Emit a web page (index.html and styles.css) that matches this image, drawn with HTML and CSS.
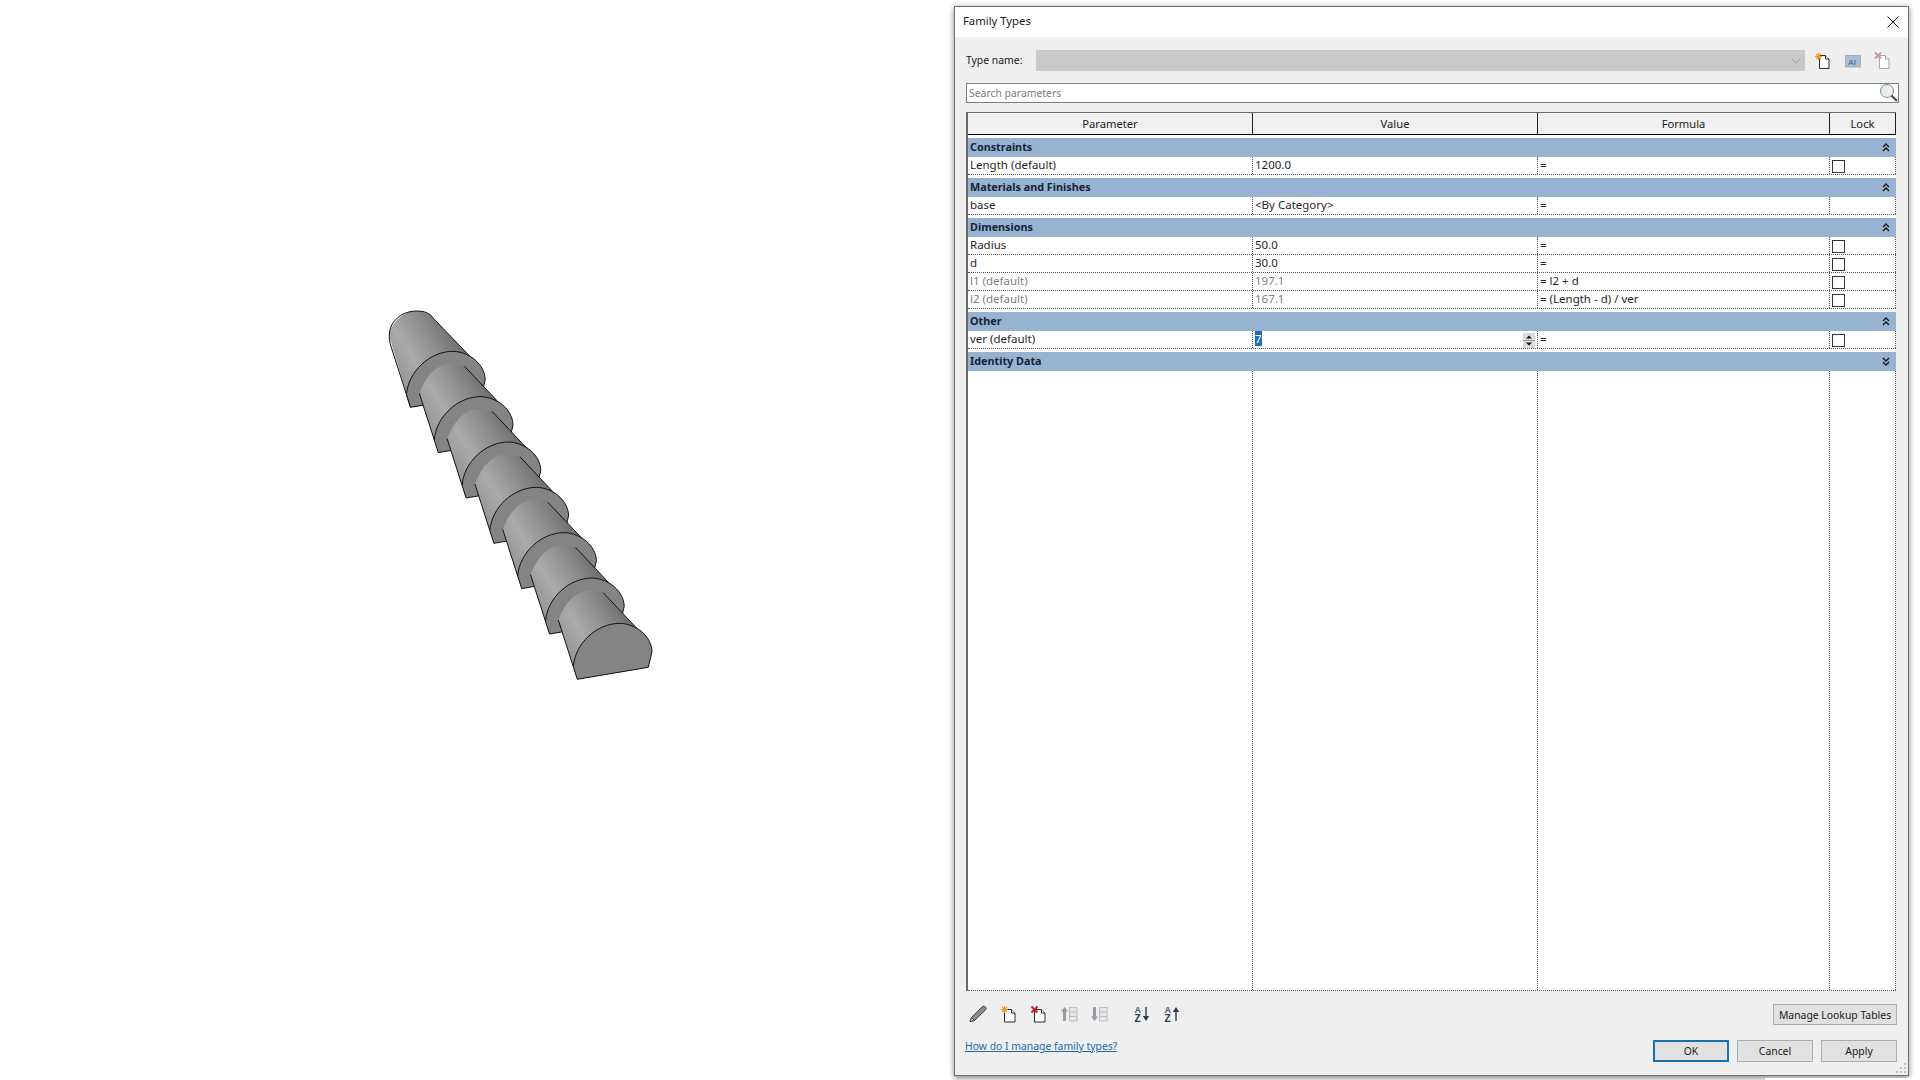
FILE: index.html
```html
<!DOCTYPE html>
<html lang="en">
<head>
<meta charset="utf-8">
<title>Family Types</title>
<link rel="stylesheet" href="styles.css">
</head>
<body>
<main class="stage">
  <svg class="model" width="290" height="390" viewBox="380 300 290 390" aria-label="3D model">
    <defs>
      <linearGradient id="cone" gradientUnits="userSpaceOnUse" x1="554" y1="640" x2="626" y2="596">
        <stop offset="0" stop-color="#929292"/>
        <stop offset="0.32" stop-color="#aaaaaa"/>
        <stop offset="0.62" stop-color="#8d8d8d"/>
        <stop offset="1" stop-color="#626262"/>
      </linearGradient>
      <path id="face" d="M577.3 679.3L573.3 666.7C575 643.3 596.7 623.3 620 623.3C636.7 624 651.7 636.7 652 651.7L648.3 667.3Z"/>
      <g id="tooth">
        <path d="M558.3 620C566 600 578 590.7 588 590.7C594 591 600 592 603.3 592.7L640 631.7L648.3 667.3L577.3 679.3L573.3 666.7Z" fill="url(#cone)"/>
        <path d="M558.3 620L573.3 666.7M603.3 592.7L640 631.7" class="edge"/>
        <use href="#face" class="face"/>
      </g>
    </defs>
    <g transform="translate(-166.8 -272)">
      <path d="M556.1 608.7C556 597 569 583 583.5 583C591 583 597 585 600.1 590.3L640 631.7L648.3 667.3L588 678L577.3 679.3Z" fill="url(#cone)"/>
      <path d="M577.3 679.3L556.9 615.5C555.5 610 555.7 604 558 598C563 588 573 583 583.5 583C591 583 597 585 600.1 590.3L640 631.7" class="edge"/>
      <use href="#face" class="face"/>
    </g>
    <use href="#tooth" transform="translate(-139 -226.7)"/>
    <use href="#tooth" transform="translate(-111.2 -181.3)"/>
    <use href="#tooth" transform="translate(-83.4 -136)"/>
    <use href="#tooth" transform="translate(-55.6 -90.7)"/>
    <use href="#tooth" transform="translate(-27.8 -45.3)"/>
    <use href="#tooth"/>
  </svg>
</main>

<section class="dialog">
  <header class="titlebar">
    <span class="title">Family Types</span>
    <svg class="close" width="12" height="12" viewBox="0 0 12 12"><path d="M.5.5l11 11M11.5.5l-11 11" stroke="#222" fill="none"/></svg>
  </header>

  <div class="dialog-body">
    <div class="type-row">
      <label class="type-label">Type name:</label>
      <div class="type-combo">
        <svg width="10" height="6" viewBox="0 0 10 6"><path d="M.5.5L5 5 9.500.5" stroke="#a4a4a4" fill="none"/></svg>
      </div>
      <div class="type-tools">
        <svg class="icon page-icon" width="18" height="18" viewBox="0 0 18 18">
          <path class="page" d="M5.500 3.500h6l3.500 3.500v9.500H5.500z"/><path class="page" d="M11.500 3.500V7H15"/>
          <path class="star" d="M4.500 1v7M1 4.500h7M2 2l5 5M7 2L2 7"/>
        </svg>
        <svg class="icon" width="18" height="16" viewBox="0 0 18 16">
          <rect x="1.500" y="2.500" width="15" height="11.500" fill="#a6bfd6" stroke="#a9adb1"/>
          <text x="4" y="12" class="tool-letter">AI</text>
        </svg>
        <svg class="icon page-icon" width="18" height="18" viewBox="0 0 18 18">
          <path class="page pale" d="M5.500 3.500h6l3.500 3.500v9.500H5.500z"/><path class="page pale" d="M11.500 3.500V7H15"/>
          <path class="cross pale-cross" d="M1 .500l6 6M7 .500l-6 6"/>
        </svg>
      </div>
    </div>

    <div class="search">
      <span class="search-text">Search parameters</span>
      <svg class="lens" width="20" height="20" viewBox="0 0 20 20">
        <circle cx="8" cy="8" r="6.500" fill="#e9eff0" stroke="#7f8a8c"/>
        <path d="M12.500 12.500l5.500 5.500" stroke="#555" stroke-width="2.400"/>
      </svg>
    </div>

    <div class="table">
      <div class="thead">
        <div class="th">Parameter</div>
        <div class="th">Value</div>
        <div class="th">Formula</div>
        <div class="th">Lock</div>
      </div>
      <div class="tbody">
        <div class="group"><span>Constraints</span><svg class="chev" width="8" height="9" viewBox="0 0 8 9"><path d="M1 4l3-3 3 3M1 8l3-3 3 3"/></svg></div>
        <div class="row">
          <div class="cell">Length (default)</div><div class="cell">1200.0</div><div class="cell">=</div>
          <div class="cell lock"><i class="check"></i></div>
        </div>
        <div class="gap"></div>
        <div class="group"><span>Materials and Finishes</span><svg class="chev" width="8" height="9" viewBox="0 0 8 9"><path d="M1 4l3-3 3 3M1 8l3-3 3 3"/></svg></div>
        <div class="row">
          <div class="cell">base</div><div class="cell">&lt;By Category&gt;</div><div class="cell">=</div>
          <div class="cell lock"></div>
        </div>
        <div class="gap"></div>
        <div class="group"><span>Dimensions</span><svg class="chev" width="8" height="9" viewBox="0 0 8 9"><path d="M1 4l3-3 3 3M1 8l3-3 3 3"/></svg></div>
        <div class="row">
          <div class="cell">Radius</div><div class="cell">50.0</div><div class="cell">=</div>
          <div class="cell lock"><i class="check"></i></div>
        </div>
        <div class="row">
          <div class="cell">d</div><div class="cell">30.0</div><div class="cell">=</div>
          <div class="cell lock"><i class="check"></i></div>
        </div>
        <div class="row">
          <div class="cell muted">l1 (default)</div><div class="cell muted">197.1</div><div class="cell">= l2 + d</div>
          <div class="cell lock"><i class="check"></i></div>
        </div>
        <div class="row">
          <div class="cell muted">l2 (default)</div><div class="cell muted">167.1</div><div class="cell">= (Length - d) / ver</div>
          <div class="cell lock"><i class="check"></i></div>
        </div>
        <div class="gap"></div>
        <div class="group"><span>Other</span><svg class="chev" width="8" height="9" viewBox="0 0 8 9"><path d="M1 4l3-3 3 3M1 8l3-3 3 3"/></svg></div>
        <div class="row">
          <div class="cell">ver (default)</div>
          <div class="cell spin-cell"><span class="selected">7</span>
            <span class="spinner">
              <svg width="12" height="15" viewBox="0 0 12 15"><rect width="12" height="15" fill="#dcdcdc"/><path d="M0 7.500h12" stroke="#9a9a9a"/><path d="M6 2.500l3 3H3z M6 12.500l3-3H3z" fill="#111"/></svg>
            </span>
          </div>
          <div class="cell">=</div>
          <div class="cell lock"><i class="check"></i></div>
        </div>
        <div class="gap"></div>
        <div class="group"><span>Identity Data</span><svg class="chev" width="8" height="9" viewBox="0 0 8 9"><path d="M1 1l3 3 3-3M1 5l3 3 3-3"/></svg></div>
        <div class="row empty">
          <div class="cell"></div><div class="cell"></div><div class="cell"></div><div class="cell lock"></div>
        </div>
      </div>
    </div>

    <div class="tools-row">
      <div class="tools">
        <svg class="tool" width="20" height="18" viewBox="0 0 20 18">
          <path d="M2 16.500l1.500-4L14.500 1.500c1-.6 2.300-.3 3 .5.700.8.900 2 .2 2.800L6.500 15.500z" fill="#8d8d8d" stroke="#3d3d3d"/>
          <path d="M2 16.500l1.500-4 3 3z" fill="#e9dfc8" stroke="#3d3d3d"/>
        </svg>
        <svg class="tool" width="18" height="18" viewBox="0 0 18 18">
          <path class="page" d="M4.500 4.500h7l3.500 3.500v9H4.500z"/><path class="page" d="M11.500 4.500V8H15"/>
          <path class="star" d="M4.500 1v7M1 4.500h7M2 2l5 5M7 2L2 7"/>
        </svg>
        <svg class="tool" width="18" height="18" viewBox="0 0 18 18">
          <path class="page" d="M4.500 4.500h7l3.500 3.500v9H4.500z"/><path class="page" d="M11.500 4.500V8H15"/>
          <path class="cross" d="M1.500 1.500l6 6M7.500 1.500l-6 6"/>
        </svg>
        <svg class="tool" width="18" height="18" viewBox="0 0 18 18">
          <path d="M4.500 2L8 6.500H6V16H3V6.500H1z" fill="#979b9f"/>
          <rect x="9.500" y="2.500" width="7.500" height="13.500" fill="#e4e8ea" stroke="#b9bec2"/>
          <path d="M9.500 7h7.500M9.500 11.500h7.500" stroke="#b9bec2"/>
        </svg>
        <svg class="tool" width="18" height="18" viewBox="0 0 18 18">
          <path d="M4.500 16L8 11.500H6V2H3v9.500H1z" fill="#979b9f"/>
          <rect x="9.500" y="2.500" width="7.500" height="13.500" fill="#e4e8ea" stroke="#b9bec2"/>
          <path d="M9.500 7h7.500M9.500 11.500h7.500" stroke="#b9bec2"/>
        </svg>
        <svg class="tool sort-first" width="18" height="18" viewBox="0 0 18 18">
          <text x="1.500" y="8" class="sort-a">A</text><text x="1.500" y="16.500" class="sort-z">Z</text>
          <path d="M13 2v10" stroke="#2c3a58" stroke-width="1.400"/><path d="M9.800 11h6.400L13 16z" fill="#2c3a58"/>
        </svg>
        <svg class="tool" width="18" height="18" viewBox="0 0 18 18">
          <text x="1.500" y="8" class="sort-a">A</text><text x="1.500" y="16.500" class="sort-z">Z</text>
          <path d="M13 16V6" stroke="#2c3a58" stroke-width="1.400"/><path d="M9.800 7h6.400L13 2z" fill="#2c3a58"/>
        </svg>
      </div>
      <button class="btn lookup" type="button">Manage Lookup Tables</button>
    </div>

    <div class="footer">
      <a class="help" href="#">How do I manage family types?</a>
      <div class="actions">
        <button class="btn action primary" type="button">OK</button>
        <button class="btn action" type="button">Cancel</button>
        <button class="btn action" type="button">Apply</button>
      </div>
    </div>
  </div>
  <svg class="grip" width="12" height="12" viewBox="0 0 12 12"><path d="M9 1h2v2H9zM5 5h2v2H5zM9 5h2v2H9zM1 9h2v2H1zM5 9h2v2H5zM9 9h2v2H9z" fill="#bdbdbd"/></svg>
</section>
<div class="behind"></div>
</body>
</html>
```
FILE: styles.css
```css
* { box-sizing: border-box; }
html, body { margin: 0; height: 100%; }
body {
  position: relative;
  width: 1920px;
  height: 1080px;
  overflow: hidden;
  background: #fff;
  display: flex;
  align-items: flex-start;
  font-family: "Noto Sans", "Open Sans", "Liberation Sans", sans-serif;
  font-size: 11.500px;
  color: #1a1a1a;
}
.stage { width: 954px; flex: none; padding: 300px 0 0 380px; }
.model { display: block; }
.edge { fill: none; stroke: #111; stroke-width: 1; }
.face { fill: #848484; stroke: #111; stroke-width: 1; }

.dialog {
  position: relative;
  width: 955px;
  height: 1070px;
  margin-top: 6px;
  flex: none;
  background: #efefef;
  border: 1px solid #6e6e6e;
  box-shadow: 0 0 6px rgba(0,0,0,.22), 0 3px 5px rgba(0,0,0,.3);
  display: flex;
  flex-direction: column;
}
.behind { position: absolute; left: 1765px; top: 1078px; width: 155px; height: 2px; background: #fff; }
.titlebar {
  height: 30px;
  background: #fff;
  flex: none;
  display: flex;
  align-items: center;
  justify-content: space-between;
  padding: 0 9px 3px 8px;
}
.title { font-size: 11.300px; color: #222; }
.close { display: block; margin-top: 2px; }
.dialog-body { padding: 13px 10px 0 10px; flex: 1; display: flex; flex-direction: column; }

.type-row { display: flex; align-items: center; height: 21px; }
.type-label { width: 71px; flex: none; font-size: 10.400px; padding-left: 1px; padding-bottom: 1px; }
.type-combo {
  width: 769px;
  height: 21px;
  background: #c9c9c9;
  display: flex;
  align-items: center;
  justify-content: flex-end;
  padding-right: 4px;
}
.type-tools { display: flex; align-items: center; margin-left: 9px; gap: 12px; }
.icon { display: block; flex: none; }
.page-icon { margin-top: 1px; }
.page { fill: #fff; stroke: #2a2a2a; }
.page.pale { stroke: #a8a8a8; }
.star { fill: none; stroke: #e9972d; stroke-width: 1.200; }
.cross { fill: none; stroke: #c5222f; stroke-width: 2; }
.pale-cross { stroke: #c49a9a; }
.tool-letter { font: bold 8px "Liberation Sans", sans-serif; fill: #587a9a; }

.search {
  height: 20px;
  width: 933px;
  margin: 12px 0 0 1px;
  background: #fff;
  border: 1px solid #7d7d7d;
  display: flex;
  align-items: center;
  justify-content: space-between;
  padding: 0 0 0 2px;
}
.search-text { color: #7b7b7b; font-size: 10.400px; padding-bottom: 1px; }
.lens { display: block; margin-right: -1px; }

.table {
  width: 930px;
  margin-top: 9px;
  height: 879px;
  border-top: 1px solid #6a6a6a;
  border-left: 2px solid #6a6a6a;
  background: #fff;
  display: flex;
  flex-direction: column;
  position: relative;
  left: 1px;
}
.thead {
  height: 22px;
  flex: none;
  display: grid;
  grid-template-columns: 284px 285px 292px 67px;
  background: #f0f0f0;
  border-bottom: 1px solid #000;
  font-size: 11.200px;
}
.th {
  display: flex;
  align-items: center;
  justify-content: center;
  border-left: 1px solid #222;
  border-right: 0;
}
.th:first-child { border-left: 0; }
.th:last-child { border-right: 1px solid #222; }
.tbody { flex: 1; display: flex; flex-direction: column; padding-top: 3px; background: #fff; }
.group {
  height: 19px;
  flex: none;
  background: #98b3d1;
  display: flex;
  align-items: center;
  justify-content: space-between;
  padding: 0 6px 2px 2px;
  font-weight: 700;
  font-size: 10.800px;
  color: #13233b;
}
.chev { display: block; margin-top: 1px; }
.chev path { fill: none; stroke: #111; stroke-width: 1.300; }
.row {
  height: 18px;
  flex: none;
  display: grid;
  grid-template-columns: 284px 285px 292px 67px;
  border-bottom: 1px dotted #555;
}
.row.empty { flex: 1; height: auto; }
.cell {
  border-left: 1px dotted #555;
  padding-left: 2px;
  line-height: 16px;
  white-space: nowrap;
  color: #1f1f1f;
}
.cell:first-child { border-left: 0; }
.cell:last-child { border-right: 1px dotted #555; }
.muted { color: #7f7f7f; }
.lock { padding: 3px 0 0 2px; }
.check { display: block; width: 13px; height: 13px; background: #fff; border: 1px solid #333; }
.gap { height: 3px; flex: none; background: #fff; }
.spin-cell { display: flex; justify-content: space-between; padding-right: 2px; }
.selected { background: #1a6fb5; color: #fff; width: 7px; height: 15px; line-height: 15px; display: block; }
.spinner { display: block; padding-top: 2px; }
.spinner svg { display: block; }

.tools-row { display: flex; justify-content: space-between; align-items: flex-start; margin-top: 13px; }
.tools { display: flex; align-items: center; height: 21px; margin-top: -1px; padding-left: 3px; gap: 12px; }
.tool { display: block; flex: none; }
.sort-first { margin-left: 13px; }
.sort-a { font: bold 9px "Liberation Sans", sans-serif; fill: #4a5a7f; }
.sort-z { font: bold 10px "Liberation Sans", sans-serif; fill: #2c3a58; }

.btn {
  font-family: inherit;
  font-size: 10.400px;
  color: #1a1a1a;
  background: #e1e1e1;
  border: 1px solid #adadad;
  padding: 0;
  white-space: nowrap;
}
.lookup { width: 124px; height: 21px; margin-right: 1px; }
.footer { display: flex; justify-content: space-between; align-items: flex-start; margin-top: 15px; }
.help { font-size: 10.400px; color: #1b6aa8; text-decoration: underline; line-height: 16px; margin-top: -2px; }
.actions { display: flex; gap: 8px; margin-right: 1px; }
.action { width: 76px; height: 22px; }
.primary { border: 2px solid #1a6fb0; }
.grip { position: absolute; right: 1px; bottom: 1px; }
```
